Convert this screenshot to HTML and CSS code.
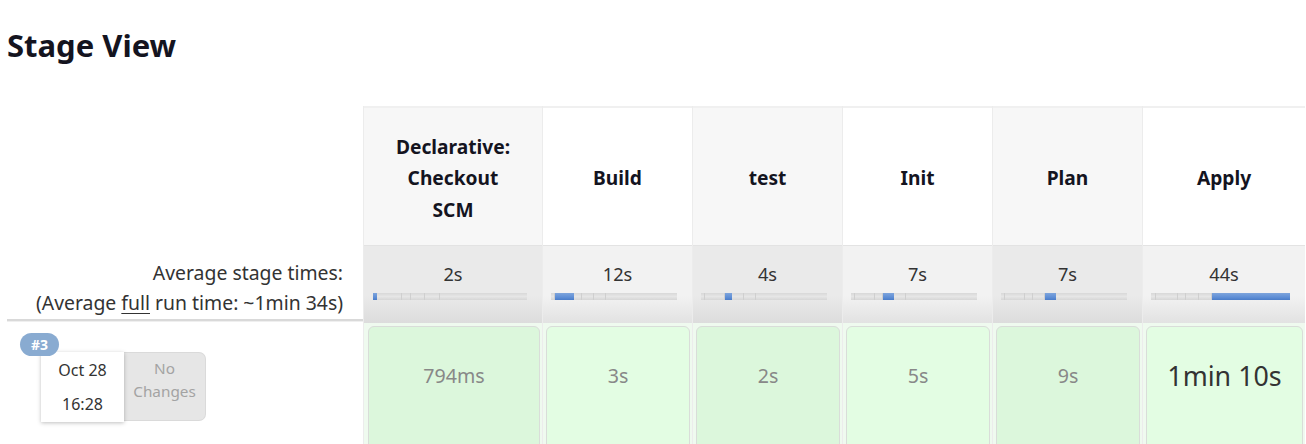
FILE: index.html
```html
<!DOCTYPE html>
<html>
<head>
<meta charset="utf-8">
<link rel="stylesheet" href="styles.css">
</head>
<body>
<h2 class="title">Stage View</h2>
<div class="stage-view">
  <div class="left">
    <div class="left-head"></div>
    <div class="left-avg">
      <div>Average stage times:</div>
      <div>(Average <u>full</u> run time: ~1min 34s)</div>
    </div>
    <div class="left-build">
      <span class="badge">#3</span>
      <div class="run">
        <div class="date"><div>Oct 28</div><div>16:28</div></div>
        <div class="changes">No<br>Changes</div>
      </div>
    </div>
  </div>

  <div class="col odd c1">
    <div class="head">Declarative: Checkout SCM</div>
    <div class="avg"><div class="time">2s</div>
      <div class="bar"><span class="seg on" style="flex:2"></span><span class="seg" style="flex:12"></span><span class="seg" style="flex:4"></span><span class="seg" style="flex:7"></span><span class="seg" style="flex:7"></span><span class="seg" style="flex:44"></span></div>
    </div>
    <div class="build"><div class="box">794ms</div></div>
  </div>

  <div class="col even">
    <div class="head">Build</div>
    <div class="avg"><div class="time">12s</div>
      <div class="bar"><span class="seg" style="flex:2"></span><span class="seg on" style="flex:12"></span><span class="seg" style="flex:4"></span><span class="seg" style="flex:7"></span><span class="seg" style="flex:7"></span><span class="seg" style="flex:44"></span></div>
    </div>
    <div class="build"><div class="box">3s</div></div>
  </div>

  <div class="col odd">
    <div class="head">test</div>
    <div class="avg"><div class="time">4s</div>
      <div class="bar"><span class="seg" style="flex:2"></span><span class="seg" style="flex:12"></span><span class="seg on" style="flex:4"></span><span class="seg" style="flex:7"></span><span class="seg" style="flex:7"></span><span class="seg" style="flex:44"></span></div>
    </div>
    <div class="build"><div class="box">2s</div></div>
  </div>

  <div class="col even">
    <div class="head">Init</div>
    <div class="avg"><div class="time">7s</div>
      <div class="bar"><span class="seg" style="flex:2"></span><span class="seg" style="flex:12"></span><span class="seg" style="flex:4"></span><span class="seg on" style="flex:7"></span><span class="seg" style="flex:7"></span><span class="seg" style="flex:44"></span></div>
    </div>
    <div class="build"><div class="box">5s</div></div>
  </div>

  <div class="col odd">
    <div class="head">Plan</div>
    <div class="avg"><div class="time">7s</div>
      <div class="bar"><span class="seg" style="flex:2"></span><span class="seg" style="flex:12"></span><span class="seg" style="flex:4"></span><span class="seg" style="flex:7"></span><span class="seg on" style="flex:7"></span><span class="seg" style="flex:44"></span></div>
    </div>
    <div class="build"><div class="box">9s</div></div>
  </div>

  <div class="col even c6">
    <div class="head">Apply</div>
    <div class="avg"><div class="time">44s</div>
      <div class="bar"><span class="seg" style="flex:2"></span><span class="seg" style="flex:12"></span><span class="seg" style="flex:4"></span><span class="seg" style="flex:7"></span><span class="seg" style="flex:7"></span><span class="seg on" style="flex:44"></span></div>
    </div>
    <div class="build"><div class="box big">1min 10s</div></div>
  </div>
</div>
</body>
</html>
```

FILE: styles.css
```css
html, body {
  margin: 0;
  padding: 0;
  background: #fff;
  overflow: hidden;
}
body {
  font-family: "Noto Sans", "Open Sans", sans-serif;
  color: #333;
  width: 1306px;
  height: 444px;
}
.title {
  margin: 0;
  padding: 26px 0 0 7px;
  height: 79px;
  box-sizing: border-box;
  font-size: 31px;
  font-weight: 700;
  color: #14141f;
  line-height: 38px;
}
.stage-view {
  display: flex;
  margin-top: 27px;
  margin-left: 7px;
  width: 1320px;
}
.left {
  width: 356px;
  flex: none;
}
.left-head {
  height: 139px;
}
.left-avg {
  height: 76px;
  box-sizing: border-box;
  padding: 13px 20px 0 0;
  text-align: right;
  font-size: 19.4px;
  line-height: 30px;
  color: #333;
  border-bottom: 2px solid #d9d9d9;
  box-shadow: 0 1px 0 #efefef;
  white-space: nowrap;
}
.left-avg u {
  text-decoration-thickness: 1px;
  text-underline-offset: 3px;
}
.left-build {
  position: relative;
  padding: 31px 0 0 34px;
}
.badge {
  position: absolute;
  left: 13px;
  top: 12px;
  width: 39px;
  height: 23px;
  border-radius: 12px;
  background: #89abd1;
  color: #fff;
  font-size: 14px;
  font-weight: 700;
  line-height: 23px;
  text-align: center;
  z-index: 2;
}
.run {
  display: flex;
  align-items: stretch;
}
.date {
  width: 83px;
  height: 70px;
  background: #fff;
  box-shadow: 0 1px 4px rgba(0,0,0,0.25);
  text-align: center;
  font-size: 16px;
  line-height: 34px;
  color: #333;
  z-index: 1;
  padding-top: 1px;
  box-sizing: border-box;
}
.changes {
  width: 82px;
  height: 69px;
  background: #e6e6e6;
  border: 1px solid #dadada;
  border-left: none;
  border-radius: 0 7px 7px 0;
  box-sizing: border-box;
  text-align: center;
  color: #a3a3a3;
  font-size: 15.3px;
  line-height: 23px;
  padding-top: 4px;
}
.col {
  width: 150px;
  flex: none;
  border-left: 1px solid #ececec;
  box-sizing: border-box;
}
.col.c1 { width: 179px; }
.col.c6 { width: 163px; }
.head {
  height: 139px;
  box-sizing: border-box;
  display: flex;
  align-items: center;
  justify-content: center;
  text-align: center;
  font-size: 19.2px;
  font-weight: 700;
  line-height: 31.5px;
  color: #14141f;
  padding: 3px 20px 0;
  border-top: 2px solid #f0f0f0;
}
.c1 .head { padding: 3px 28px 0; }
.odd .head { background: #f7f7f7; }
.even .head { background: #fff; }
.avg {
  height: 78px;
  box-sizing: border-box;
  padding-top: 13px;
  border-top: 1px solid #e3e3e3;
  text-align: center;
}
.odd .avg { background: linear-gradient(to bottom, #eaeaea 0%, #eaeaea 65%, #dcdcdc 100%); }
.even .avg { background: linear-gradient(to bottom, #f2f2f2 0%, #f2f2f2 65%, #e2e2e2 100%); }
.time {
  font-size: 18.2px;
  line-height: 30px;
  color: #333;
}
.bar {
  display: flex;
  height: 7px;
  margin: 4px 15px 0 8px;
  background: #dcdcdc;
  box-shadow: inset 0 0 1px rgba(0,0,0,0.15);
}
.c1 .bar { margin-left: 9px; }
.seg {
  display: block;
  background: linear-gradient(to bottom, #d8d8d8, #e6e6e6 50%, #d6d6d6);
  border-right: 1px solid #cfcfcf;
}
.seg:last-child { border-right: none; }
.seg.on {
  background: linear-gradient(to bottom, #7ea4dc, #5f8fd6 60%, #4a7cc8);
  border-right: none;
}
.build {
  padding: 3px 2px 0 3px;
  height: 140px;
  background: #effaef;
}
.box {
  height: 130px;
  border: 1px solid #d9ddd9;
  border-radius: 6px;
  box-sizing: border-box;
  text-align: center;
  padding-top: 34px;
  font-size: 19.6px;
  line-height: 30px;
  color: #888;
}
.odd .box { background: #dcf7dc; }
.even .box { background: #e3fde3; }
.c1 .build { padding-left: 4px; }
.box.big {
  font-size: 26.8px;
  color: #333;
  padding-top: 32px;
  line-height: 34px;
}
```
